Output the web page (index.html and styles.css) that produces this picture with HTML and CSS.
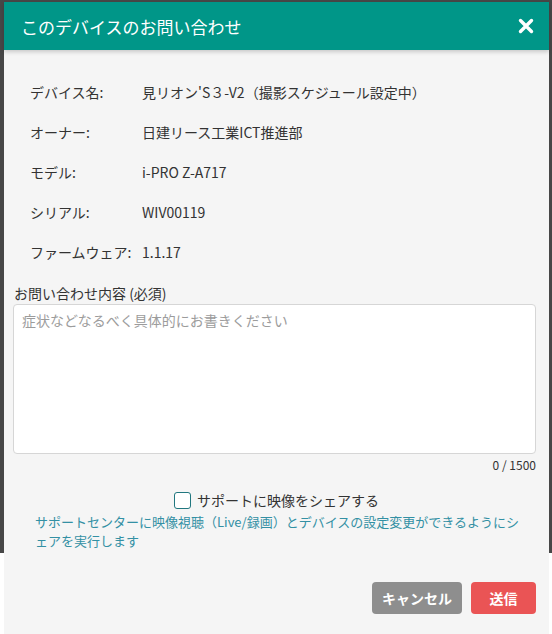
FILE: index.html
```html
<!DOCTYPE html>
<html lang="ja">
<head>
  <meta charset="UTF-8">
  <title>このデバイスのお問い合わせ</title>
  <link rel="stylesheet" href="styles.css">
</head>
<body>
  <div class="backdrop">
    <div class="modal">
      <div class="modal-header">
        <span class="modal-title">このデバイスのお問い合わせ</span>
        <button class="close" aria-label="閉じる">
          <svg width="16" height="16" viewBox="0 0 16 16">
            <path d="M2.5 2.5 L13.5 13.5 M13.5 2.5 L2.5 13.5" stroke="#fff" stroke-width="3.4" stroke-linecap="round"/>
          </svg>
        </button>
      </div>

      <div class="modal-body">
        <div class="info">
          <div class="info-row"><span class="info-label">デバイス名:</span><span>見リオン'S３-V2（撮影スケジュール設定中）</span></div>
          <div class="info-row"><span class="info-label">オーナー:</span><span>日建リース工業ICT推進部</span></div>
          <div class="info-row"><span class="info-label">モデル:</span><span>i-PRO Z-A717</span></div>
          <div class="info-row"><span class="info-label">シリアル:</span><span>WIV00119</span></div>
          <div class="info-row"><span class="info-label">ファームウェア:</span><span>1.1.17</span></div>
        </div>

        <label class="field-label" for="message">お問い合わせ内容 (必須)</label>
        <textarea id="message" placeholder="症状などなるべく具体的にお書きください"></textarea>
        <div class="counter">0 / 1500</div>

        <label class="share">
          <span class="checkbox"></span>
          <span>サポートに映像をシェアする</span>
        </label>
        <p class="note">サポートセンターに映像視聴（Live/録画）とデバイスの設定変更ができるようにシェアを実行します</p>
      </div>

      <div class="modal-footer">
        <button class="btn btn-cancel">キャンセル</button>
        <button class="btn btn-send">送信</button>
      </div>
    </div>
  </div>
</body>
</html>
```

FILE: styles.css
```css
body {
  margin: 0;
  background: #fff;
  font-family: "Noto Sans CJK JP", "Noto Sans", sans-serif;
  color: #333;
  overflow: hidden;
  height: 634px;
}
.backdrop {
  background: #474747;
  height: 553px;
  padding: 2px 3px 0 4px;
  box-sizing: border-box;
}
.modal {
  width: 545px;
  height: 640px;
  background: #f5f5f5;
}
.modal-header {
  height: 48px;
  background: #009688;
  display: flex;
  align-items: center;
  justify-content: space-between;
  padding: 0 15px 0 17px;
  box-shadow: 0 2px 4px rgba(0, 0, 0, 0.18);
  position: relative;
}
.modal-title {
  color: #fff;
  font-size: 17px;
}
.close {
  border: none;
  background: none;
  padding: 0;
  width: 16px;
  height: 16px;
  display: flex;
}
.modal-body {
  padding: 0 13px 0 9px;
}
.info {
  margin-top: 22px;
  padding-left: 17px;
}
.info-row {
  display: flex;
  align-items: center;
  height: 40px;
  font-size: 14px;
}
.info-label {
  width: 112px;
  flex-shrink: 0;
}
.field-label {
  display: block;
  font-size: 14px;
  line-height: 22px;
  margin-top: 10px;
  padding-left: 1px;
}
textarea {
  display: block;
  width: 100%;
  height: 150px;
  box-sizing: border-box;
  border: 1px solid #d6d6d6;
  border-radius: 4px;
  background: #fff;
  resize: none;
  padding: 5px 8px;
  font-family: inherit;
  font-size: 14px;
  line-height: 20px;
}
textarea::placeholder {
  color: #9c9c9c;
}
.counter {
  text-align: right;
  font-size: 12px;
  line-height: 18px;
  margin-top: 2px;
}
.share {
  display: flex;
  justify-content: center;
  align-items: center;
  gap: 6px;
  font-size: 14px;
  line-height: 20px;
  margin-top: 16px;
  padding-left: 4px;
}
.checkbox {
  width: 15px;
  height: 15px;
  border: 1px solid #21777f;
  border-radius: 3px;
  background: #fff;
}
.note {
  margin: 2px 11px 0 22px;
  font-size: 13px;
  line-height: 19px;
  color: #3390a4;
}
.modal-footer {
  display: flex;
  justify-content: flex-end;
  gap: 9px;
  padding: 32px 13px 0 0;
}
.btn {
  height: 32px;
  border: none;
  border-radius: 4px;
  color: #fff;
  font-family: inherit;
  font-size: 14px;
  font-weight: bold;
}
.btn-cancel {
  width: 90px;
  background: #8e8e8e;
}
.btn-send {
  width: 65px;
  background: #ea5455;
}
```
